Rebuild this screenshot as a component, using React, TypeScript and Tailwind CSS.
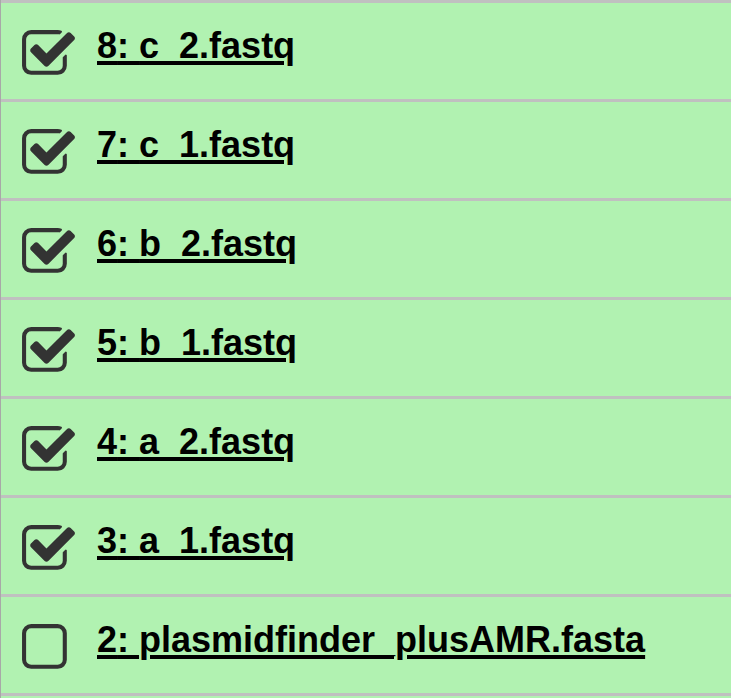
const files = [
  { id: 8, name: 'c_2.fastq', checked: true },
  { id: 7, name: 'c_1.fastq', checked: true },
  { id: 6, name: 'b_2.fastq', checked: true },
  { id: 5, name: 'b_1.fastq', checked: true },
  { id: 4, name: 'a_2.fastq', checked: true },
  { id: 3, name: 'a_1.fastq', checked: true },
  { id: 2, name: 'plasmidfinder_plusAMR.fasta', checked: false },
];

function CheckIcon({ checked }: { checked: boolean }) {
  return (
    <svg viewBox="0 0 1792 1792" className="w-[57px] h-[57px] shrink-0 fill-[#333333]">
      {checked ? (
        <path d="M1472 930v318q0 119-84.5 203.5t-203.5 84.5h-832q-119 0-203.5-84.5t-84.5-203.5v-832q0-119 84.5-203.5t203.5-84.5h832q63 0 117 25 15 7 18 23 3 17-9 29l-49 49q-10 10-23 10-3 0-9-2-23-6-45-6h-832q-66 0-113 47t-47 113v832q0 66 47 113t113 47h832q66 0 113-47t47-113v-254q0-13 9-22l64-64q10-10 23-10 6 0 12 3 20 8 20 29zm231-489l-814 814q-24 24-57 24t-57-24l-430-430q-24-24-24-57t24-57l110-110q24-24 57-24t57 24l263 263 647-647q24-24 57-24t57 24l110 110q24 24 24 57t-24 57z" />
      ) : (
        <g transform="translate(64 0)">
          <path d="M1120 256h-832q-66 0-113 47t-47 113v832q0 66 47 113t113 47h832q66 0 113-47t47-113v-832q0-66-47-113t-113-47zm288 160v832q0 119-84.5 203.5t-203.5 84.5h-832q-119 0-203.5-84.5t-84.5-203.5v-832q0-119 84.5-203.5t203.5-84.5h832q119 0 203.5 84.5t84.5 203.5z" />
        </g>
      )}
    </svg>
  );
}

export default function App() {
  return (
    <div className="w-[731px] h-[698px] overflow-hidden bg-[#b1f2b1] border-l border-[#a8a8a8] font-['Liberation_Sans',Arial,sans-serif]">
      {files.map((f) => (
        <div
          key={f.id}
          className="flex items-start h-[99px] border-t-[3px] border-[#c0c0c0] pl-[19px] gap-5"
        >
          <div className="mt-[23px]">
            <CheckIcon checked={f.checked} />
          </div>
          <a className="mt-[22px] text-[36px] leading-[41px] font-bold text-black underline decoration-[4px] underline-offset-[3px] whitespace-nowrap cursor-pointer">
            {f.id}: {f.name}
          </a>
        </div>
      ))}
      {/* next row, only its top edge shows */}
      <div className="h-[5px] border-t-[3px] border-[#c0c0c0]" />
    </div>
  );
}
